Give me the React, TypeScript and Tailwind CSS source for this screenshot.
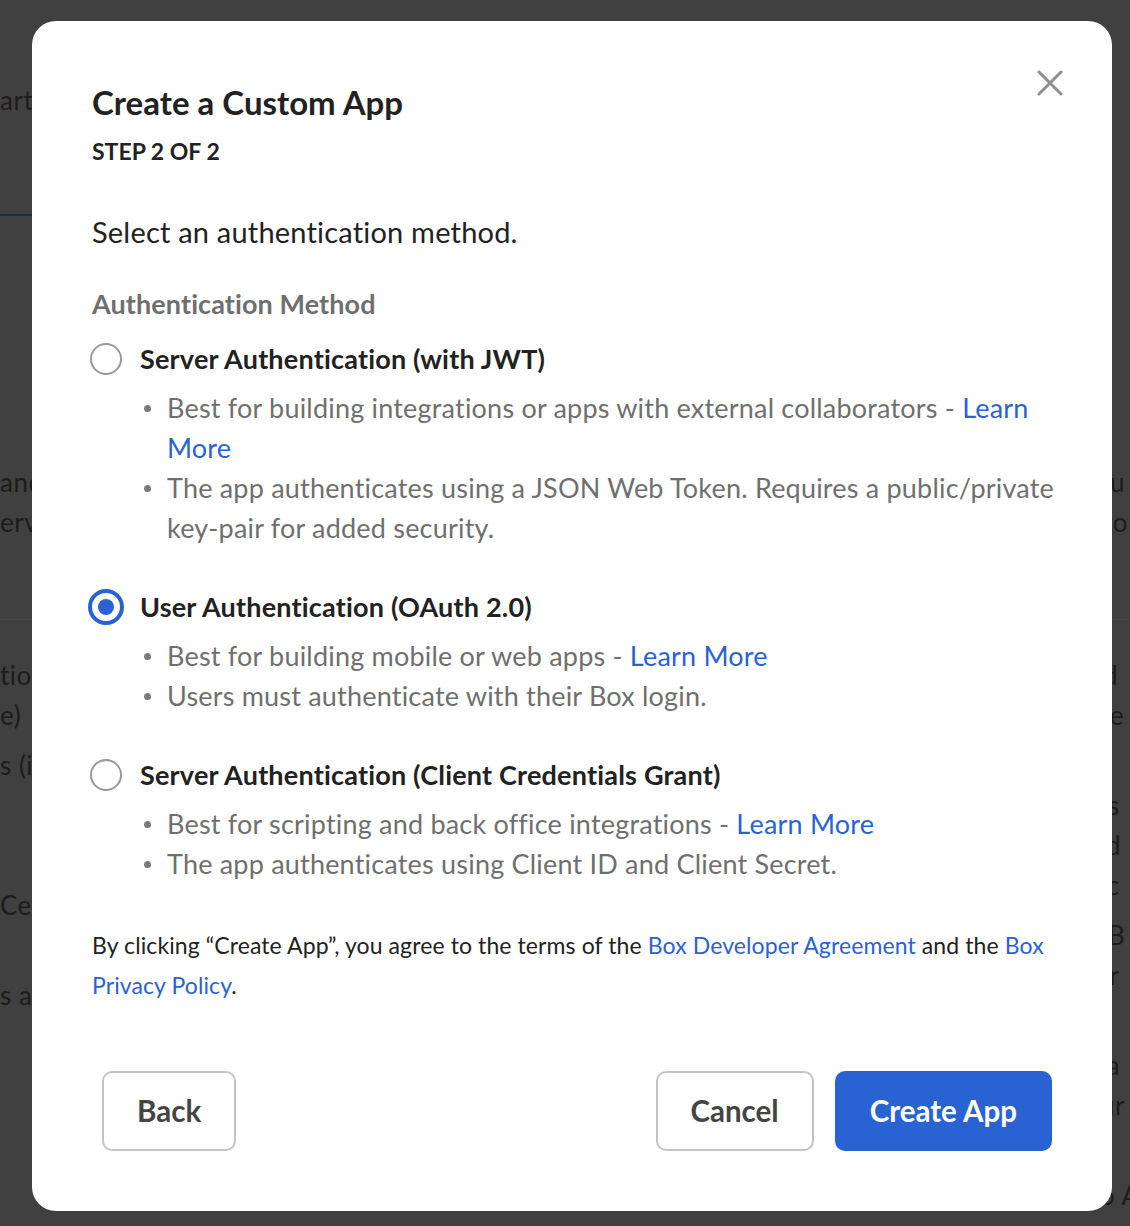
type Bullet = { text: string; link?: string };

interface AuthOption {
  id: string;
  label: string;
  bullets: Bullet[];
}

const options: AuthOption[] = [
  {
    id: "jwt",
    label: "Server Authentication (with JWT)",
    bullets: [
      { text: "Best for building integrations or apps with external collaborators - ", link: "Learn More" },
      { text: "The app authenticates using a JSON Web Token. Requires a public/private key-pair for added security." },
    ],
  },
  {
    id: "oauth",
    label: "User Authentication (OAuth 2.0)",
    bullets: [
      { text: "Best for building mobile or web apps - ", link: "Learn More" },
      { text: "Users must authenticate with their Box login." },
    ],
  },
  {
    id: "ccg",
    label: "Server Authentication (Client Credentials Grant)",
    bullets: [
      { text: "Best for scripting and back office integrations - ", link: "Learn More" },
      { text: "The app authenticates using Client ID and Client Secret." },
    ],
  },
];

function Radio({ checked }: { checked: boolean }) {
  return (
    <div className="w-[36px] h-[36px] flex items-center justify-center shrink-0">
      {checked ? (
        <div className="w-[36px] h-[36px] rounded-full border-[4px] border-[#2a62d4] flex items-center justify-center">
          <div className="w-[16px] h-[16px] rounded-full bg-[#2a62d4]" />
        </div>
      ) : (
        <div className="w-[32px] h-[32px] rounded-full border-2 border-[#9a9a9a]" />
      )}
    </div>
  );
}

// faded page behind the overlay
function BackgroundPage() {
  return (
    <div className="flex w-full h-full text-[26px] leading-[40px] text-[#1c1c1c] tracking-[0.5px]">
      <div className="flex flex-col w-[120px]">
        <div className="h-[80px]" />
        <div className="h-[40px] whitespace-nowrap">artner Apps</div>
        <div className="h-[94px]" />
        <div className="h-[2px] w-[80px] bg-[#1b2850]" />
        <div className="h-[246px]" />
        <div className="h-[40px] whitespace-nowrap">and</div>
        <div className="h-[40px] whitespace-nowrap">ervice</div>
        <div className="h-[77px]" />
        <div className="h-[1px] w-[80px] bg-[#4a4a4a]" />
        <div className="h-[35px]" />
        <div className="h-[40px] whitespace-nowrap">tion</div>
        <div className="h-[40px] whitespace-nowrap">e)</div>
        <div className="h-[10px]" />
        <div className="h-[40px] whitespace-nowrap">s (if</div>
        <div className="h-[100px]" />
        <div className="h-[40px] whitespace-nowrap">Center</div>
        <div className="h-[50px]" />
        <div className="h-[40px] whitespace-nowrap">s are</div>
      </div>
      <div className="flex-1" />
      <div className="flex flex-col w-[30px] overflow-hidden">
        <div className="h-[462px]" />
        <div className="h-[40px] pl-[10px] whitespace-nowrap">u</div>
        <div className="h-[40px] whitespace-nowrap">co</div>
        <div className="h-[77px]" />
        <div className="h-[1px] bg-[#4a4a4a]" />
        <div className="h-[35px]" />
        <div className="h-[40px] pl-[3px] whitespace-nowrap">d</div>
        <div className="h-[40px] whitespace-nowrap">te</div>
        <div className="h-[50px]" />
        <div className="h-[40px] pl-[8px] whitespace-nowrap">s</div>
        <div className="h-[40px] pl-[6px] whitespace-nowrap">d</div>
        <div className="h-[40px] whitespace-nowrap">ic</div>
        <div className="h-[10px]" />
        <div className="h-[40px] pl-[8px] whitespace-nowrap">B</div>
        <div className="h-[40px] whitespace-nowrap">fr</div>
        <div className="h-[50px]" />
        <div className="h-[40px] whitespace-nowrap">la</div>
        <div className="h-[40px] whitespace-nowrap">ur</div>
        <div className="h-[50px]" />
        <div className="h-[40px] whitespace-nowrap">o A</div>
      </div>
    </div>
  );
}

export default function App() {
  return (
    <div
      className="relative w-[1130px] h-[1226px] overflow-hidden bg-[#404040]"
      style={{ fontFamily: "Lato, 'Open Sans', sans-serif" }}
    >
      <BackgroundPage />

      {/* Modal */}
      <div className="absolute left-[32px] top-[21px] w-[1080px] h-[1190px] bg-white rounded-[24px] pt-[63px] px-[60px]">
        <button className="absolute right-[49px] top-[49px] w-[26px] h-[26px] text-[#8e8e8e]">
          <svg viewBox="0 0 26 26" className="w-[26px] h-[26px]" fill="none" stroke="currentColor" strokeWidth={3} strokeLinecap="round">
            <path d="M2 2 L24 24 M24 2 L2 24" />
          </svg>
        </button>

        <h1 className="text-[33px] leading-[36px] font-bold text-[#222]">Create a Custom App</h1>
        <div className="mt-[19px] text-[23px] leading-[24px] font-bold text-[#222]">STEP 2 OF 2</div>

        <p className="mt-[53px] text-[29px] leading-[32px] text-[#222] tracking-[0.2px]">
          Select an authentication method.
        </p>

        <div className="mt-[40px] text-[27px] leading-[32px] font-bold text-[#6f6f6f] tracking-[0.1px]">
          Authentication Method
        </div>

        <div className="mt-[19px] flex flex-col gap-[39px]">
          {options.map((opt) => (
            <div key={opt.id} className="flex flex-col">
              <div className="flex items-center gap-[16px] ml-[-4px] h-[40px]">
                <Radio checked={opt.id === "oauth"} />
                <span className="text-[27px] leading-[40px] font-bold text-[#222] tracking-[0.2px] whitespace-nowrap">
                  {opt.label}
                </span>
              </div>
              <ul className="mt-[9px] ml-[52px] mr-[-4px] flex flex-col">
                {opt.bullets.map((b, i) => (
                  <li key={i} className="flex items-start">
                    <span className="mt-[17px] w-[7px] h-[7px] rounded-full bg-[#7a7a7a] shrink-0" />
                    <span className="ml-[16px] text-[27px] leading-[40px] text-[#6f6f6f] tracking-[0.2px]">
                      {b.text}
                      {b.link && <a className="text-[#2a62d6]">{b.link}</a>}
                    </span>
                  </li>
                ))}
              </ul>
            </div>
          ))}
        </div>

        <p className="mt-[41px] mr-[-4px] text-[23px] leading-[40px] text-[#222] tracking-[0.1px]">
          By clicking “Create App”, you agree to the terms of the{" "}
          <a className="text-[#2a62d6]">Box Developer Agreement</a> and the{" "}
          <a className="text-[#2a62d6]">Box Privacy Policy</a>.
        </p>

        <div className="mt-[66px] flex items-center">
          <button className="ml-[10px] h-[80px] px-[33px] rounded-[10px] border-2 border-[#c4c4c4] bg-white text-[29.5px] font-bold text-[#444]">
            Back
          </button>
          <div className="flex-1" />
          <button className="h-[80px] px-[33px] rounded-[10px] border-2 border-[#c4c4c4] bg-white text-[29.5px] font-bold text-[#444]">
            Cancel
          </button>
          <button className="ml-[21px] h-[80px] px-[35px] rounded-[10px] bg-[#2962d3] text-[29.5px] font-bold text-white">
            Create App
          </button>
        </div>
      </div>
    </div>
  );
}
